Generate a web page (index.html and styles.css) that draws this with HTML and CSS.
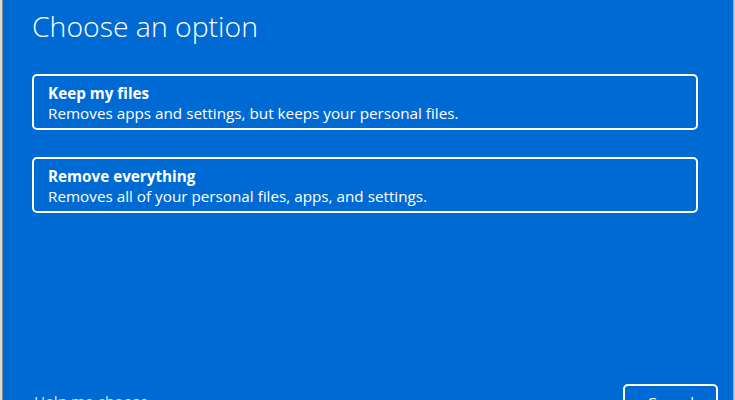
FILE: index.html
```html
<!DOCTYPE html>
<html lang="en">
<head>
<meta charset="utf-8">
<title>Choose an option</title>
<link rel="stylesheet" href="styles.css">
</head>
<body>
<div class="frame">
  <div class="edge-left"></div>
  <main class="panel">
    <h1 class="title">Choose an option</h1>
    <div class="options">
      <button class="option">
        <span class="option-name">Keep my files</span>
        <span class="option-desc">Removes apps and settings, but keeps your personal files.</span>
      </button>
      <button class="option">
        <span class="option-name">Remove everything</span>
        <span class="option-desc">Removes all of your personal files, apps, and settings.</span>
      </button>
    </div>
    <footer class="footer">
      <a class="help" href="#">Help me choose</a>
      <button class="cancel">Cancel</button>
    </footer>
  </main>
  <div class="edge-right"></div>
</div>
</body>
</html>
```

FILE: styles.css
```css
* { box-sizing: border-box; }
html, body { margin: 0; padding: 0; height: 100%; }
body {
  background: #006ad4;
  font-family: "Open Sans", "Noto Sans", sans-serif;
  color: #ffffff;
  overflow: hidden;
}
.frame {
  display: flex;
  height: 400px;
}
.edge-left {
  width: 3px;
  background: #d9d9d9;
  border-right: 1px solid #8a8a8a;
}
.edge-right {
  width: 2px;
  background: #c9c9c9;
  border-left: 1px solid #9aa6b8;
}
.panel {
  flex: 1;
  background: #006ad4;
  padding: 0 15px 0 29px;
  display: flex;
  flex-direction: column;
}
.title {
  margin: 8px 0 0 0;
  font-size: 28.4px;
  line-height: 36px;
  font-weight: 300;
}
.options {
  margin-top: 30px;
  display: flex;
  flex-direction: column;
  gap: 27px;
}
.option {
  display: flex;
  flex-direction: column;
  align-items: flex-start;
  width: 666px;
  padding: 7px 14px 5px;
  border: 2px solid #ffffff;
  border-radius: 5px;
  background: transparent;
  color: #ffffff;
  font-family: inherit;
  text-align: left;
  cursor: pointer;
}
.option-name {
  font-size: 15.25px;
  line-height: 20px;
  font-weight: 700;
}
.option-desc {
  font-size: 15.25px;
  line-height: 20px;
  font-weight: 400;
}
.footer {
  margin-top: 171px;
  display: flex;
  justify-content: space-between;
  align-items: flex-start;
}
.help {
  margin-top: 7px;
  margin-left: 2px;
  color: #d6e6fa;
  font-size: 15.25px;
  line-height: 20px;
  text-decoration: none;
}
.cancel {
  width: 95px;
  height: 32px;
  border: 2px solid #ffffff;
  border-radius: 5px;
  background: transparent;
  color: #ffffff;
  font-family: inherit;
  font-size: 15.25px;
  line-height: 20px;
  padding: 3px 0 0;
}
```
